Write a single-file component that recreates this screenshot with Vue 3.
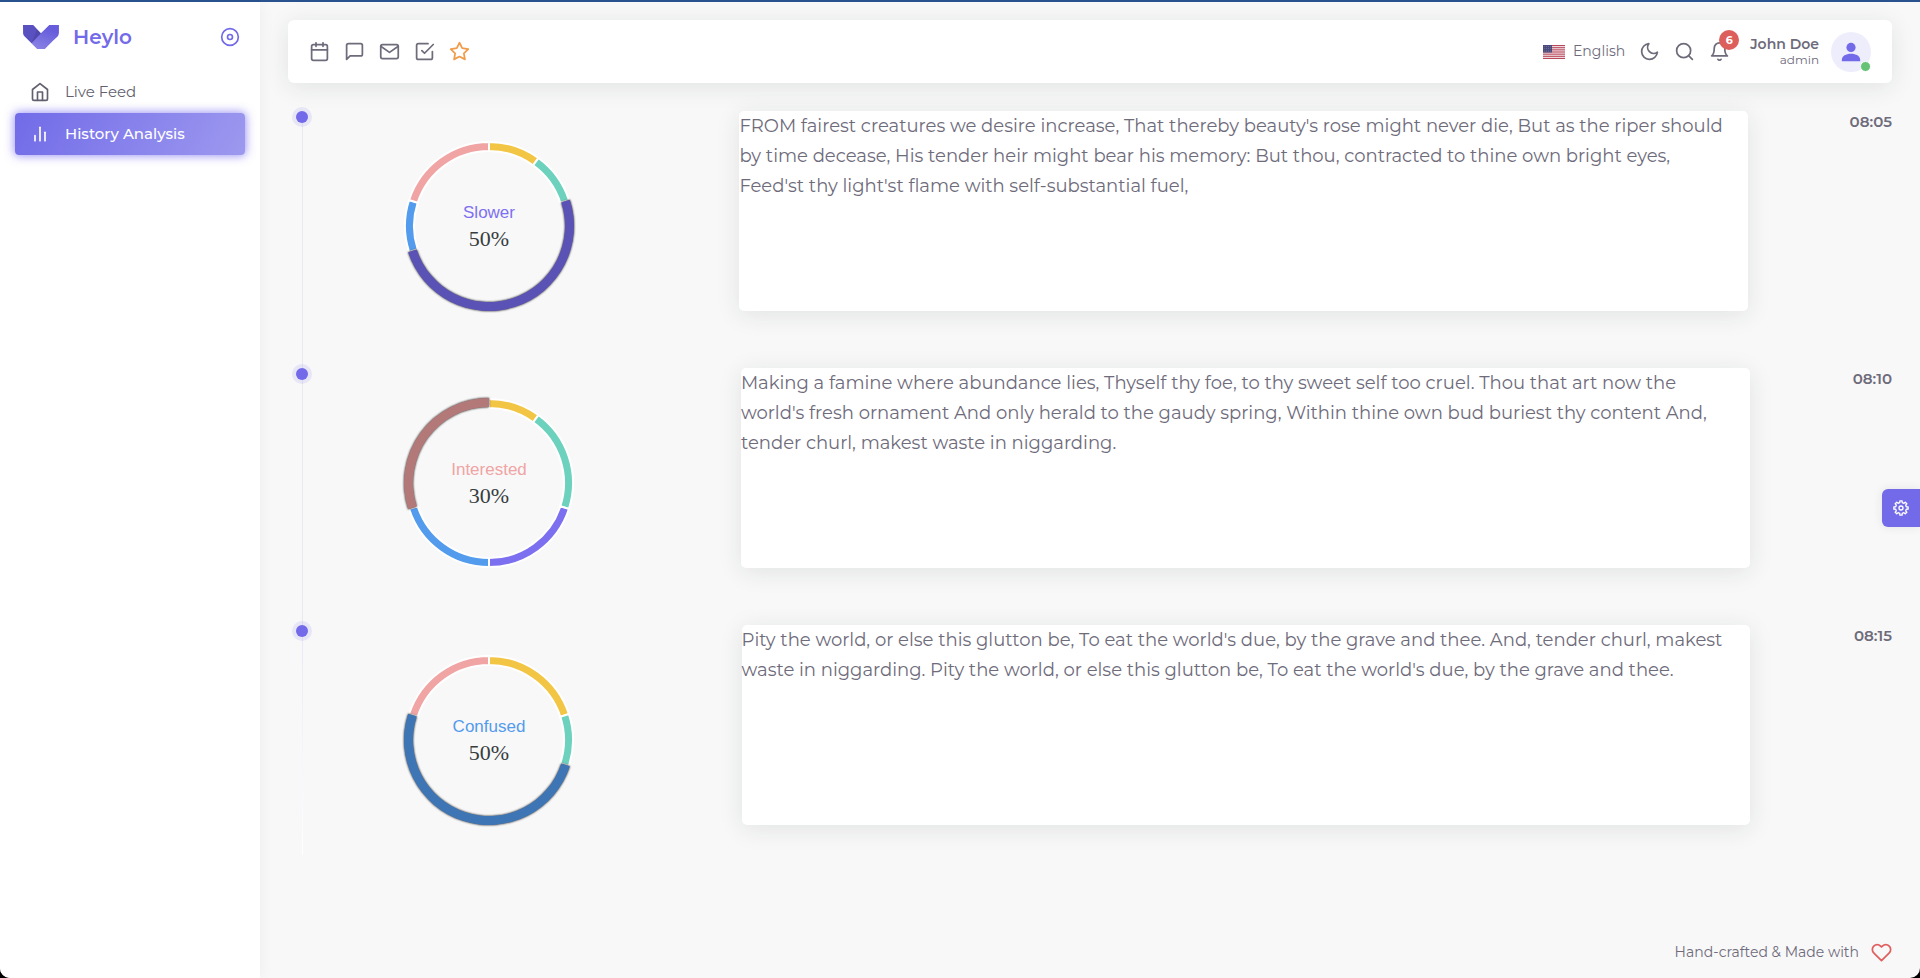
<template>
  <div class="app">
    <aside class="sidebar">
      <div class="brand">
        <a href="#" class="brand-link">
          <svg class="brand-logo" viewBox="0 0 139 95" aria-hidden="true">
            <defs>
              <linearGradient id="logoLight" x1="0.7" y1="0.2" x2="0.35" y2="1">
                <stop offset="0" stop-color="#fff" stop-opacity="0" />
                <stop offset="1" stop-color="#fff" />
              </linearGradient>
            </defs>
            <path fill="#675ddc" d="M0 0H39.2L69.3 32.3L101.4 0H138.8V29.8C138 37.4 135.8 42.6 132.3 45.4C128.7 48.2 112.3 64.5 83 94.2H56.3L6.7 44.4C2.5 40 .3 35.1 .3 29.8Z" />
            <path fill="#000" opacity="0.12" d="M0 0H39.2L69.3 32.3L32.8 70.5L6.7 44.4C2.5 40 .3 35.1 .3 29.8Z" />
            <path fill="#000" opacity="0.1" d="M69.3 32.3L53.9 16L32.8 70.5Z" />
            <path fill="url(#logoLight)" opacity="0.22" d="M101.4 0L32.8 70.5L56.3 94.2H83L132.3 45.4C135.8 42.6 138 37.4 138.8 29.8V0Z" />
          </svg>
          <span class="brand-name">Heylo</span>
        </a>
        <button class="icon-btn pin" aria-label="Toggle menu">
          <svg class="icon" viewBox="0 0 24 24"><circle cx="12" cy="12" r="10" /><circle cx="12" cy="12" r="3" /></svg>
        </button>
      </div>
      <nav class="nav">
        <a
          v-for="item in navItems"
          :key="item.label"
          href="#"
          class="nav-item"
          :class="{ active: item.active }"
        >
          <svg class="icon" viewBox="0 0 24 24"><path v-for="d in item.paths" :key="d" :d="d" /></svg>
          <span class="nav-label">{{ item.label }}</span>
        </a>
      </nav>
    </aside>

    <div class="content">
      <header class="navbar">
        <div class="shortcuts">
          <a
            v-for="s in shortcuts"
            :key="s.label"
            href="#"
            class="shortcut"
            :class="{ starred: s.starred }"
            :aria-label="s.label"
          >
            <svg class="icon" viewBox="0 0 24 24"><path v-for="d in s.paths" :key="d" :d="d" /></svg>
          </a>
        </div>
        <div class="tools">
          <button class="language">
            <svg class="flag" viewBox="0 0 22 14" aria-hidden="true">
              <rect width="22" height="14" fill="#f3e9ec" />
              <rect v-for="n in 7" :key="n" :y="(n - 1) * 2.15" width="22" height="1.1" fill="#b9475a" />
              <rect width="9" height="7.5" fill="#4b4a7c" />
              <g fill="#a5a5c4">
                <circle v-for="n in 12" :key="n" :cx="1.2 + ((n - 1) % 4) * 2.2" :cy="1.4 + Math.floor((n - 1) / 4) * 2.3" r="0.4" />
              </g>
            </svg>
            <span>English</span>
          </button>
          <button class="icon-btn" aria-label="Dark mode">
            <svg class="icon" viewBox="0 0 24 24"><path d="M21 12.79A9 9 0 1 1 11.21 3 7 7 0 0 0 21 12.79z" /></svg>
          </button>
          <button class="icon-btn" aria-label="Search">
            <svg class="icon" viewBox="0 0 24 24"><circle cx="11" cy="11" r="8" /><path d="M21 21l-4.35-4.35" /></svg>
          </button>
          <button class="icon-btn bell" aria-label="Notifications">
            <svg class="icon" viewBox="0 0 24 24">
              <path d="M18 8A6 6 0 0 0 6 8c0 7-3 9-3 9h18s-3-2-3-9" /><path d="M13.73 21a2 2 0 0 1-3.46 0" />
            </svg>
            <span class="badge">6</span>
          </button>
          <button class="user">
            <span class="user-text">
              <span class="user-name">John Doe</span>
              <span class="user-role">admin</span>
            </span>
            <span class="avatar">
              <svg viewBox="0 0 24 24" aria-hidden="true">
                <circle cx="12" cy="7" r="5" />
                <path d="M2 22v-1.5C2 16.5 6.5 14 12 14s10 2.500 10 6.500V22z" />
              </svg>
              <span class="status"></span>
            </span>
          </button>
        </div>
      </header>

      <main>
        <ul class="timeline">
          <li v-for="entry in entries" :key="entry.time" class="timeline-item">
            <span class="point"></span>
            <svg class="donut" viewBox="-115 -115 230 230" role="img" :aria-label="entry.mood">
              <path
                v-for="s in slices(entry)"
                :key="s.name"
                :d="s.d"
                :fill="s.fill"
                :class="s.active ? 'slice-active' : 'slice'"
              />
              <text class="donut-label" y="-8" :fill="moods[entry.mood].color">{{ entry.mood }}</text>
              <text class="donut-value" y="20">{{ entry.values[entry.mood] }}%</text>
            </svg>
            <div class="card">{{ entry.text }}</div>
            <time class="time">{{ entry.time }}</time>
          </li>
        </ul>
      </main>

      <footer class="footer">
        <span>Hand-crafted &amp; Made with</span>
        <svg class="icon heart" viewBox="0 0 24 24">
          <path d="M20.84 4.61a5.5 5.5 0 0 0-7.78 0L12 5.67l-1.06-1.06a5.5 5.5 0 0 0-7.78 7.78l1.06 1.06L12 21.23l7.78-7.78 1.06-1.06a5.5 5.5 0 0 0 0-7.78z" />
        </svg>
      </footer>
    </div>

    <button class="customizer" aria-label="Settings">
      <svg class="cog" viewBox="0 0 24 24">
        <path :d="cogPath" /><circle cx="12" cy="12" r="3" />
      </svg>
    </button>
  </div>
</template>

<script setup>
import { ref } from 'vue'

const navItems = ref([
  {
    label: 'Live Feed',
    active: false,
    paths: ['M3 9l9-7 9 7v11a2 2 0 0 1-2 2H5a2 2 0 0 1-2-2z', 'M9 22V12h6v10'],
  },
  { label: 'History Analysis', active: true, paths: ['M18 20V10', 'M12 20V4', 'M6 20v-6'] },
])

const shortcuts = [
  {
    label: 'Calendar',
    paths: ['M5 4h14a2 2 0 0 1 2 2v14a2 2 0 0 1-2 2H5a2 2 0 0 1-2-2V6a2 2 0 0 1 2-2z', 'M16 2v4', 'M8 2v4', 'M3 10h18'],
  },
  { label: 'Chat', paths: ['M21 15a2 2 0 0 1-2 2H7l-4 4V5a2 2 0 0 1 2-2h14a2 2 0 0 1 2 2z'] },
  {
    label: 'Email',
    paths: ['M4 4h16c1.1 0 2 .9 2 2v12c0 1.1-.9 2-2 2H4c-1.1 0-2-.9-2-2V6c0-1.1.9-2 2-2z', 'M22 6l-10 7L2 6'],
  },
  { label: 'Todo', paths: ['M9 11l3 3L22 4', 'M21 12v7a2 2 0 0 1-2 2H5a2 2 0 0 1-2-2V5a2 2 0 0 1 2-2h11'] },
  {
    label: 'Bookmarks',
    starred: true,
    paths: ['M12 2l3.09 6.26L22 9.27l-5 4.87 1.18 6.88L12 17.77l-6.18 3.25L7 14.14 2 9.27l6.91-1.01L12 2z'],
  },
]

const moods = {
  Bored: { color: '#f3c544', dark: '#b69333' },
  Happy: { color: '#6dd2bd', dark: '#529d8e' },
  Slower: { color: '#7d70f0', dark: '#5a52b5' },
  Confused: { color: '#539bed', dark: '#3e75b5' },
  Interested: { color: '#f0a4a4', dark: '#b37878' },
}

const entries = ref([
  {
    time: '08:05',
    mood: 'Slower',
    values: { Bored: 10, Happy: 10, Slower: 50, Confused: 10, Interested: 20 },
    text: "FROM fairest creatures we desire increase, That thereby beauty's rose might never die, But as the riper should by time decease, His tender heir might bear his memory: But thou, contracted to thine own bright eyes, Feed'st thy light'st flame with self-substantial fuel,",
  },
  {
    time: '08:10',
    mood: 'Interested',
    values: { Bored: 10, Happy: 20, Slower: 20, Confused: 20, Interested: 30 },
    text: "Making a famine where abundance lies, Thyself thy foe, to thy sweet self too cruel. Thou that art now the world's fresh ornament And only herald to the gaudy spring, Within thine own bud buriest thy content And, tender churl, makest waste in niggarding.",
  },
  {
    time: '08:15',
    mood: 'Confused',
    values: { Bored: 20, Happy: 10, Slower: 0, Confused: 50, Interested: 20 },
    text: "Pity the world, or else this glutton be, To eat the world's due, by the grave and thee. And, tender churl, makest waste in niggarding. Pity the world, or else this glutton be, To eat the world's due, by the grave and thee.",
  },
])

// Point on a circle, percent measured clockwise from the top
const point = (percent, r) => {
  const a = (percent / 100) * 2 * Math.PI
  return `${(r * Math.sin(a)).toFixed(2)} ${(-r * Math.cos(a)).toFixed(2)}`
}

const arc = (from, to, inner, outer) => {
  const large = to - from > 50 ? 1 : 0
  return `M${point(from, outer)}A${outer} ${outer} 0 ${large} 1 ${point(to, outer)}L${point(to, inner)}A${inner} ${inner} 0 ${large} 0 ${point(from, inner)}Z`
}

// The active slice is drawn last so its shadow stays on top
const slices = (entry) => {
  let start = 0
  const list = []
  for (const [name, value] of Object.entries(entry.values)) {
    const active = name === entry.mood
    if (value > 0) {
      list.push({
        name,
        active,
        fill: active ? moods[name].dark : moods[name].color,
        d: active ? arc(start, start + value, 76, 85) : arc(start, start + value, 75, 84),
      })
    }
    start += value
  }
  return list.sort((a, b) => a.active - b.active)
}

// Eight-lobed gear outline
const cogPath = (() => {
  const pts = []
  for (let i = 0; i < 8; i++) {
    for (const [offset, r] of [[-13, 8.2], [-9, 10.8], [9, 10.8], [13, 8.2]]) {
      const a = ((i * 45 + offset) * Math.PI) / 180
      pts.push(`${(12 + r * Math.sin(a)).toFixed(2)} ${(12 - r * Math.cos(a)).toFixed(2)}`)
    }
  }
  return `M${pts.join('L')}Z`
})()
</script>

<style>
html {
  background: #000;
}

body {
  margin: 0;
}
</style>

<style scoped>
.app {
  display: flex;
  min-height: 100vh;
  box-sizing: border-box;
  border-top: 2px solid #27518f;
  border-radius: 0 0 10px 10px;
  overflow: hidden;
  background: #f8f8f8;
  color: #6e6b7b;
  font-family: Montserrat, Inter, sans-serif;
  font-size: 14px;
  line-height: 21px;
}

a {
  color: inherit;
  text-decoration: none;
}

button {
  padding: 0;
  border: 0;
  background: none;
  color: inherit;
  font: inherit;
  cursor: pointer;
}

.icon {
  display: block;
  width: 21px;
  height: 21px;
  flex: none;
  fill: none;
  stroke: currentColor;
  stroke-width: 2;
  stroke-linecap: round;
  stroke-linejoin: round;
}

.sidebar {
  flex: 0 0 260px;
  background: #fff;
  box-shadow: 0 0 15px 0 rgba(34, 41, 47, 0.05);
}

.brand {
  display: flex;
  align-items: center;
  justify-content: space-between;
  padding: 18px 20px 2px 23px;
  height: 34px;
  color: #736ae9;
}

.brand-link {
  display: flex;
  align-items: center;
  gap: 14px;
}

.brand-logo {
  width: 36px;
}

.brand-name {
  font-size: 20px;
  font-weight: 600;
}

.pin .icon {
  width: 20px;
  height: 20px;
}

.nav {
  padding: 15px;
}

.nav-item {
  display: flex;
  align-items: center;
  gap: 15px;
  height: 42px;
  padding: 0 15px;
  border-radius: 4px;
  font-size: 15px;
  color: #625f6e;
}

.nav-item .icon {
  width: 20px;
  height: 20px;
}

.nav-label {
  padding-bottom: 2px;
}

.nav-item.active {
  background: linear-gradient(118deg, #716be8, #9d99ef);
  box-shadow: 0 0 10px 1px rgba(115, 103, 240, 0.7);
  color: #fff;
  font-weight: 500;
}

.content {
  flex: 1;
  min-width: 0;
  display: flex;
  flex-direction: column;
  padding: 18px 28px 0;
}

.navbar {
  display: flex;
  align-items: center;
  justify-content: space-between;
  height: 63px;
  padding: 0 21px;
  border-radius: 6px;
  background: #fff;
  box-shadow: 0 4px 24px 0 rgba(34, 41, 47, 0.1);
}

.shortcuts {
  display: flex;
  gap: 14px;
}

.starred {
  color: #f09c4a;
}

.tools,
.language,
.user {
  display: flex;
  align-items: center;
}

.tools {
  gap: 14px;
}

.language {
  gap: 8px;
}

.flag {
  width: 22px;
  height: 14px;
}

.bell {
  position: relative;
}

.badge {
  position: absolute;
  top: -11px;
  right: -9px;
  width: 20px;
  height: 20px;
  border-radius: 50%;
  background: #dd5f5c;
  color: #fff;
  font-size: 11px;
  font-weight: 700;
  line-height: 20px;
}

.user {
  gap: 12px;
  margin-left: 6px;
}

.user-text {
  display: flex;
  flex-direction: column;
  align-items: flex-end;
  line-height: 16px;
}

.user-name {
  font-weight: 600;
}

.user-role {
  font-size: 12px;
}

.avatar {
  position: relative;
  display: flex;
  align-items: center;
  justify-content: center;
  width: 40px;
  height: 40px;
  border-radius: 50%;
  background: #eeedfc;
}

.avatar svg {
  width: 22px;
  height: 22px;
  fill: #736ae9;
}

.status {
  position: absolute;
  right: 0;
  bottom: 0;
  width: 9px;
  height: 9px;
  border: 1px solid #fff;
  border-radius: 50%;
  background: #66c277;
}

.timeline {
  margin: 28px 0 0 14px;
  padding: 0;
  list-style: none;
}

.timeline-item {
  position: relative;
  display: flex;
  align-items: flex-start;
  justify-content: space-between;
  padding: 0 0 27px 37px;
  border-left: 1px solid #e9e8f1;
}

/* the line fades out after the last entry */
.timeline-item:last-child {
  padding-bottom: 0;
  border-image: linear-gradient(#e9e8f4, #fff) 1;
}

.point {
  position: absolute;
  top: 0;
  left: -7px;
  width: 12px;
  height: 12px;
  border-radius: 50%;
  background: #736ae9;
  box-shadow: 0 0 0 4px rgba(115, 103, 240, 0.12);
}

.donut {
  flex: 0 0 298px;
  height: 230px;
}

.slice {
  stroke: #fff;
  stroke-width: 2;
}

.slice-active {
  filter: drop-shadow(0 0 1px rgba(0, 0, 0, 0.9));
}

.donut text {
  text-anchor: middle;
}

.donut-label {
  font-family: "Liberation Sans", sans-serif;
  font-size: 17px;
}

.donut-value {
  font-family: "Liberation Serif", serif;
  font-size: 22px;
  fill: #373d3f;
}

.card {
  flex: 0 1 65%;
  box-sizing: border-box;
  min-height: 200px;
  padding-right: 14px;
  border-radius: 5px;
  background: #fff;
  box-shadow: 0 4px 24px 0 rgba(34, 41, 47, 0.1);
  font-size: 18px;
  line-height: 30px;
}

.time {
  font-size: 15px;
  font-weight: 600;
}

.footer {
  display: flex;
  align-items: center;
  justify-content: flex-end;
  gap: 12px;
  margin-top: auto;
  padding-bottom: 15px;
}

.heart {
  color: #e0605f;
}

.customizer {
  position: fixed;
  top: 50%;
  right: 0;
  display: flex;
  align-items: center;
  justify-content: center;
  width: 38px;
  height: 38px;
  border-radius: 6px 0 0 6px;
  background: #736ae9;
  box-shadow: 0 0 10px rgba(34, 41, 47, 0.1);
  color: #fff;
}

.cog {
  width: 16px;
  height: 16px;
  fill: none;
  stroke: currentColor;
  stroke-width: 2;
  stroke-linejoin: round;
}
</style>
